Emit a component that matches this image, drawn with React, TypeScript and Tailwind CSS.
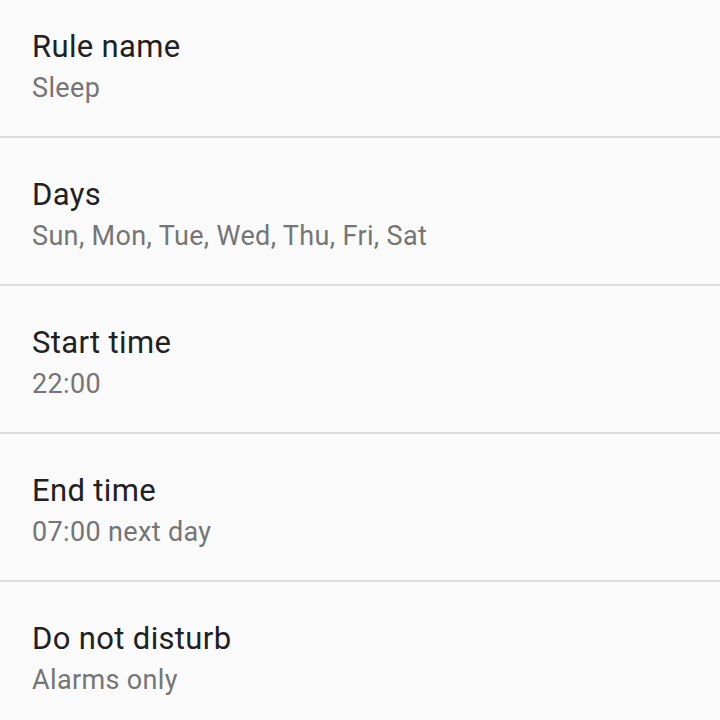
const rules = [
  { title: 'Rule name', value: 'Sleep' },
  { title: 'Days', value: 'Sun, Mon, Tue, Wed, Thu, Fri, Sat' },
  { title: 'Start time', value: '22:00' },
  { title: 'End time', value: '07:00 next day' },
  { title: 'Do not disturb', value: 'Alarms only' },
]

export default function App() {
  return (
    <div
      className="h-[720px] w-[720px] overflow-hidden bg-[#fafafa]"
      style={{ fontFamily: 'Roboto, "Noto Sans", sans-serif' }}
    >
      {rules.map((r, i) => (
        <div
          key={r.title}
          className={
            i === 0
              ? 'h-[138px] border-b-2 border-[#dcdcdc] pl-[32px] pt-[27px]'
              : i === rules.length - 1
                ? 'h-[148px] pl-[32px] pt-[37px]'
                : 'h-[148px] border-b-2 border-[#dcdcdc] pl-[32px] pt-[37px]'
          }
        >
          <div className="text-[31px] leading-[40px] tracking-[0.35px] text-[#212121]">{r.title}</div>
          <div className="mt-[3px] text-[27px] leading-[36px] tracking-[0.35px] text-[#757575]">
            {r.value}
          </div>
        </div>
      ))}
    </div>
  )
}
